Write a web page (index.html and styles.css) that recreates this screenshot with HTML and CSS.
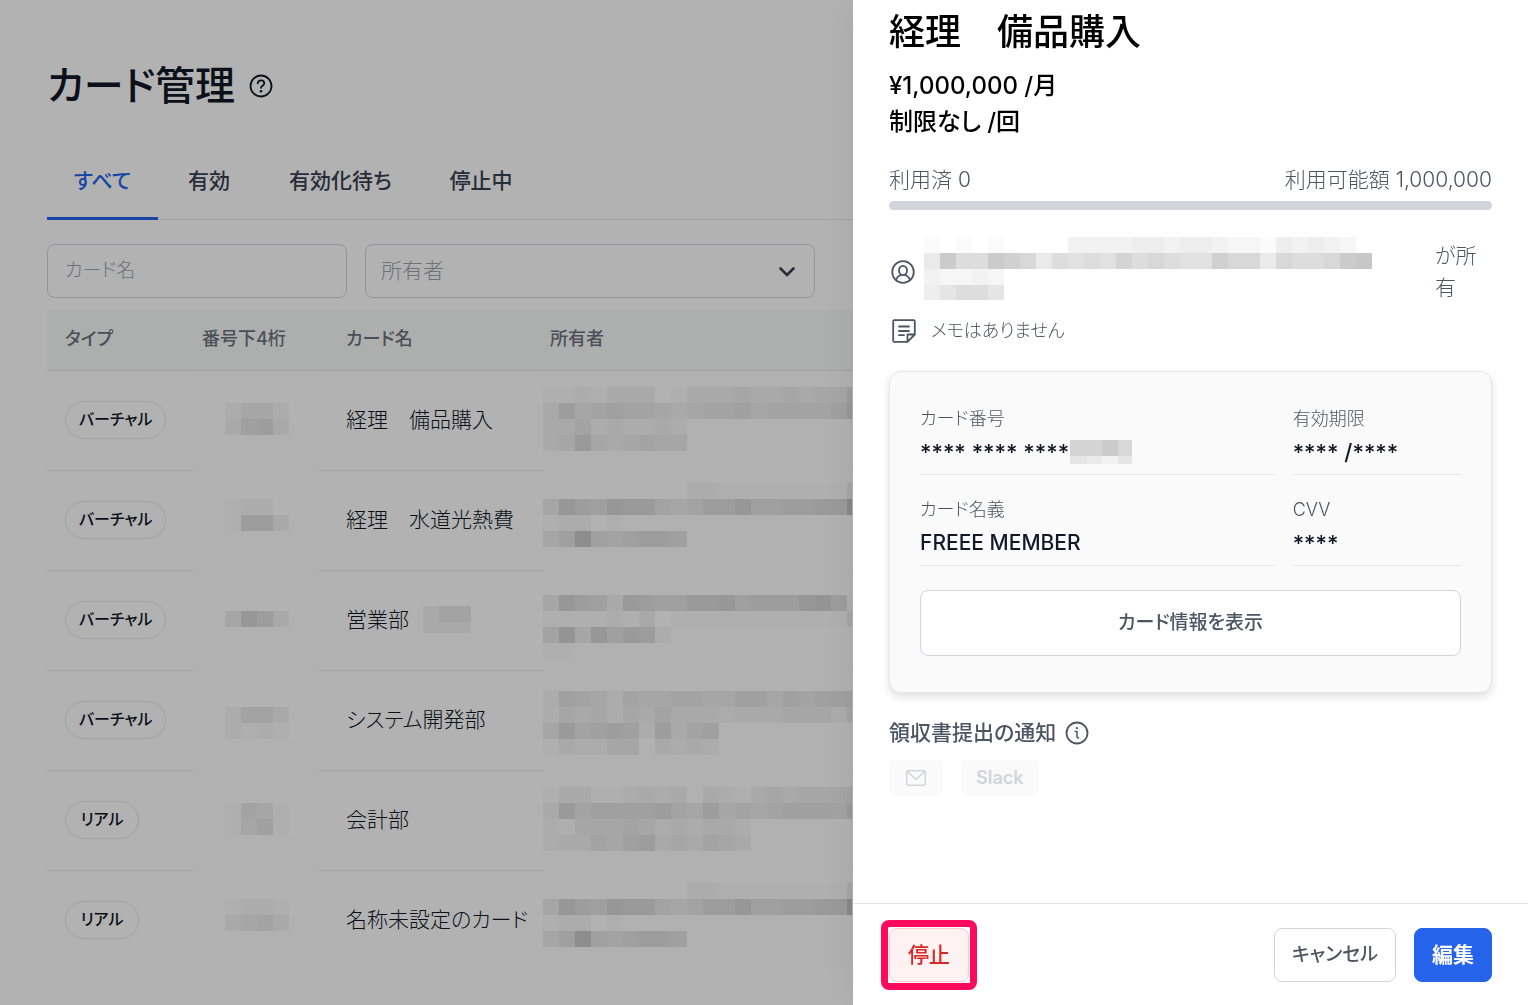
FILE: index.html
```html
<!DOCTYPE html>
<html lang="ja">
<head>
<meta charset="utf-8">
<meta name="viewport" content="width=device-width, initial-scale=1">
<title>カード管理</title>
<link rel="stylesheet" href="styles.css">
</head>
<body>
<main class="page">
  <header class="page-head">
    <h1 class="page-title">カード管理</h1>
    <svg class="icon" viewBox="0 0 24 24" role="img" aria-label="ヘルプ"><circle cx="12" cy="12" r="10.5"/><path d="M8.7 9.4C8.9 7.4 10.2 6.4 12 6.4c1.900 0 3.300 1.100 3.300 2.900 0 2.600-3.300 2.300-3.300 4.500"/><circle class="dot" cx="12" cy="17.200" r="1.300"/></svg>
  </header>

  <nav class="tabs">
    <a class="tab tab-active" href="#all">すべて</a>
    <a class="tab" href="#active">有効</a>
    <a class="tab" href="#waiting">有効化待ち</a>
    <a class="tab" href="#stopped">停止中</a>
  </nav>

  <form class="filters">
    <input class="field field-name" type="text" placeholder="カード名" aria-label="カード名">
    <div class="select-wrap">
      <select class="field field-owner" aria-label="所有者"><option>所有者</option></select>
      <svg class="chevron" viewBox="0 0 16 10" aria-hidden="true"><path d="M1.500 1.500L8 8l6.500-6.500"/></svg>
    </div>
  </form>

  <table class="cards">
    <colgroup><col class="col-type"><col class="col-number"><col class="col-name"><col></colgroup>
    <thead>
      <tr><th>タイプ</th><th>番号下4桁</th><th>カード名</th><th>所有者</th></tr>
    </thead>
    <tbody>
      <tr>
        <td><span class="badge">バーチャル</span></td>
        <td><svg class="mask mask-number" data-top="16" data-rows="00000000 00244200 00367300"></svg></td>
        <td>経理　備品購入</td>
        <td><svg class="mask mask-owner" data-top="16" data-rows="11213330133343343447 37456554345564555569 335232232 348434544"></svg></td>
      </tr>
      <tr>
        <td><span class="badge">バーチャル</span></td>
        <td><svg class="mask mask-number" data-top="12" data-rows="00000000 00122000 00177300"></svg></td>
        <td>経理　水道光熱費</td>
        <td><svg class="mask mask-owner" data-top="12" data-rows="00000000022111111114 4976988545779667788e 12201 46c656776"></svg></td>
      </tr>
      <tr>
        <td><span class="badge">バーチャル</span></td>
        <td><svg class="mask mask-number" data-top="24" data-rows="00000000 00497300"></svg></td>
        <td><span class="name">営業部<svg class="mask-inline mask-name" data-top="0" data-rows="355 333"></svg></span></td>
        <td><svg class="mask mask-owner" data-top="24" data-rows="49763876688967779a71 11112130111111111114 5a496872 11"></svg></td>
      </tr>
      <tr>
        <td><span class="badge">バーチャル</span></td>
        <td><svg class="mask mask-number" data-top="20" data-rows="00000000 00255300 00212100"></svg></td>
        <td>システム開発部</td>
        <td><svg class="mask mask-owner" data-top="20" data-rows="26542544554466465666 24342435333233344425 48567627356 13224403232"></svg></td>
      </tr>
      <tr>
        <td><span class="badge">リアル</span></td>
        <td><svg class="mask mask-number" data-top="16" data-rows="00000000 00154100 00146100"></svg></td>
        <td>会計部</td>
        <td><svg class="mask mask-owner" data-top="16" data-rows="13311232303213434445 38566667547454566658 2144454232332 2335467343543"></svg></td>
      </tr>
      <tr>
        <td><span class="badge">リアル</span></td>
        <td><svg class="mask mask-number" data-top="12" data-rows="00000000 00122100 00345300"></svg></td>
        <td>名称未設定のカード</td>
        <td><svg class="mask mask-owner" data-top="12" data-rows="00000000022111111114 4976988545779667788e 12201 46c656776"></svg></td>
      </tr>
    </tbody>
  </table>
</main>

<div class="overlay"></div>

<aside class="drawer" role="dialog" aria-labelledby="drawer-title">
  <div class="drawer-body">
    <h2 class="drawer-title" id="drawer-title">経理　備品購入</h2>
    <p class="limit">¥1,000,000 /月</p>
    <p class="limit">制限なし /回</p>

    <div class="usage"><span>利用済 0</span><span>利用可能額 1,000,000</span></div>
    <div class="usage-bar"></div>

    <div class="owner">
      <svg class="icon" viewBox="0 0 24 24" aria-hidden="true"><circle cx="12" cy="12" r="10.800"/><ellipse cx="12" cy="10.500" rx="4" ry="4.700"/><path d="M5 19.800c1-2.800 2.900-4.200 4.900-4.800M19 19.800c-1-2.800-2.900-4.200-4.900-4.800"/></svg>
      <svg class="mask-inline mask-holder" data-top="0" data-rows="101010000333344344322143432 5c88cb958787a89877b9959889cd5 32232 46886"></svg>
      <span class="owner-suffix">が所有</span>
    </div>
    <div class="memo">
      <svg class="icon" viewBox="0 0 24 24" aria-hidden="true"><path d="M2.200 1.200h19.600q1 0 1 1v13.300l-7.300 7.300H2.200q-1 0-1-1V2.200q0-1 1-1zM22.800 15.500h-7.300v7.300"/><path d="M7 7.500h10M7 12h10M7 16.200h5"/></svg>
      <span class="memo-text">メモはありません</span>
    </div>

    <section class="card">
      <dl class="details">
        <div class="detail detail-wide"><dt>カード番号</dt><dd class="secret">**** **** ****<svg class="mask-inline mask-digits" data-top="0" data-rows="aac9 6536"></svg></dd></div>
        <div class="detail"><dt>有効期限</dt><dd class="secret">**** /****</dd></div>
        <div class="detail detail-wide"><dt>カード名義</dt><dd>FREEE MEMBER</dd></div>
        <div class="detail"><dt>CVV</dt><dd class="secret">****</dd></div>
      </dl>
      <button class="button button-reveal" type="button">カード情報を表示</button>
    </section>

    <h3 class="notice-title">領収書提出の通知
      <svg class="icon" viewBox="0 0 24 24" role="img" aria-label="情報"><circle cx="12" cy="12" r="10.500"/><path class="thin" d="M10.200 10.500H12v5.200q0 1.200 1.600 1.200"/><circle class="dot" cx="11.900" cy="7.200" r="1.100"/></svg>
    </h3>
    <div class="channels">
      <button class="channel" type="button" disabled aria-label="メール"><svg class="mail" viewBox="0 0 20 16" aria-hidden="true"><rect x="0.750" y="0.750" width="18.500" height="14.500" rx="1"/><path d="M1.200 1.200l8.800 8.300 8.800-8.300"/></svg></button>
      <button class="channel" type="button" disabled>Slack</button>
    </div>
  </div>

  <footer class="drawer-foot">
    <div class="highlight"><button class="button button-stop" type="button">停止</button></div>
    <div class="actions">
      <button class="button button-cancel" type="button">キャンセル</button>
      <button class="button button-primary" type="button">編集</button>
    </div>
  </footer>
</aside>
<script src="mosaic.js"></script>
</body>
</html>
```
FILE: styles.css
```css
* { box-sizing: border-box; }

body {
  margin: 0;
  background: #fff;
  color: #111827;
  font: 400 21px/32px Inter, "Noto Sans CJK JP", sans-serif;
  font-feature-settings: "palt";
}

h1, h2, h3, p, dl, dd { margin: 0; }
button, input, select { font: inherit; font-feature-settings: inherit; color: inherit; }
svg { display: block; }

.icon {
  flex: none;
  width: 24px;
  height: 24px;
  fill: none;
  stroke: currentColor;
  stroke-width: 1.8;
  stroke-linecap: round;
  stroke-linejoin: round;
}
.icon .dot { fill: currentColor; stroke: none; }
.icon .thin { stroke-width: 1.5; }

/* Card list */
.page { height: 100vh; padding: 52px 47px 0; overflow: hidden; }
.page-head { display: flex; align-items: center; gap: 14px; }
.page-title { font-size: 40px; line-height: 68px; font-weight: 500; }

.tabs { display: flex; margin-top: 24px; border-bottom: 1px solid #e5e7eb; }
.tab {
  min-width: 102px;
  margin-bottom: -1px;
  padding: 21px 29px 20px;
  border-bottom: 3px solid transparent;
  color: #374151;
  font-weight: 500;
  text-align: center;
  text-decoration: none;
}
.tab-active { min-width: 111px; padding-right: 24px; padding-left: 24px; border-color: #2563eb; color: #2563eb; }

.filters { display: flex; gap: 18px; margin-top: 24px; }
.field {
  width: 100%;
  height: 54px;
  padding: 0 17px 2px;
  border: 1px solid #d1d5db;
  border-radius: 8px;
  background: #fff;
  color: #9ca3af;
  font-weight: 300;
}
.field::placeholder { color: #9ca3af; opacity: 1; }
.field-name { width: 300px; font-size: 19px; }
.select-wrap { position: relative; width: 450px; }
.field-owner { padding: 0 15px; appearance: none; }
.chevron {
  position: absolute;
  top: 23px;
  right: 20px;
  width: 16px;
  height: 10px;
  fill: none;
  stroke: #374151;
  stroke-width: 2.6;
  stroke-linecap: round;
}

.cards { width: 100%; margin-top: 12px; border-collapse: separate; border-spacing: 0; table-layout: fixed; }
.col-type { width: 137px; }
.col-number { width: 144px; }
.col-name { width: 204px; }
.cards th, .cards td { position: relative; padding: 0 18px 2px; border-bottom: 1px solid #e5e7eb; text-align: left; white-space: nowrap; }
.cards th { height: 61px; background: #f8fbf9; color: #6b7280; font-size: 18px; line-height: 24px; font-weight: 500; }
.cards td { height: 100px; font-weight: 300; }
.cards tr:last-child td { border-bottom: 0; }
.name { display: flex; align-items: center; gap: 14px; }

.badge {
  display: inline-block;
  min-width: 74px;
  height: 38px;
  padding: 0 13px;
  border: 1px solid #e5e7eb;
  border-radius: 19px;
  font-size: 16px;
  line-height: 35px;
  font-weight: 500;
  text-align: center;
  vertical-align: middle;
}

/* Redacted areas */
.mask { position: absolute; top: 0; height: 100%; min-height: 101px; background: #fefefe; }
.mask-number { left: 9px; width: 126px; }
.mask-owner { left: 11px; width: 309px; }
.mask-inline { flex: none; }
.mask-name { width: 48px; height: 27px; }
.mask-holder { align-self: flex-start; width: 448px; height: 63px; }
.mask-digits { width: 62px; height: 24px; margin-left: 1px; }

.overlay { position: fixed; inset: 0; background: rgba(0, 0, 0, 0.3); }

/* Detail drawer */
.drawer {
  position: fixed;
  inset: 0 0 0 auto;
  display: flex;
  flex-direction: column;
  width: 675px;
  max-width: 100%;
  background: #fff;
  box-shadow: 0 0 36px rgba(0, 0, 0, 0.08);
  color: #4b5563;
}
.drawer-body { flex: 1; min-height: 0; padding: 7px 36px 0; overflow: hidden; }
.drawer-title { margin-bottom: 11px; color: #000; font-size: 36px; line-height: 50px; font-weight: 500; }
.limit { color: #000; font-size: 24px; line-height: 36px; font-weight: 500; }

.usage { display: flex; justify-content: space-between; margin-top: 24px; font-weight: 300; }
.usage-bar { height: 9px; margin-top: 5px; border-radius: 5px; background: #d1d5db; }

.owner { display: flex; align-items: center; gap: 9px; min-height: 70px; margin-top: 27px; padding-left: 2px; font-weight: 300; }
.owner-suffix { width: 57px; margin-left: auto; padding-right: 12px; line-break: anywhere; }
.memo { display: flex; align-items: center; gap: 15px; margin-top: 8px; padding-left: 3px; font-weight: 300; }
.memo-text { font-size: 18px; }

.card {
  margin-top: 24px;
  padding: 30px 30px 36px;
  border: 1px solid #e5e7eb;
  border-radius: 12px;
  background: #fafafa;
  box-shadow: 0 4px 8px rgba(0, 0, 0, 0.12);
}
.details { display: grid; grid-template-columns: repeat(3, 1fr); gap: 18px; }
.detail { padding-bottom: 6px; border-bottom: 1px solid #e5e7eb; }
.detail-wide { grid-column: span 2; }
.detail dt { padding-top: 3px; font-size: 18px; line-height: 27px; font-weight: 300; }
.detail dd { display: flex; align-items: center; height: 36px; padding-top: 4px; color: #111827; font-weight: 500; }
.detail .secret { font-size: 22px; }

.button {
  height: 54px;
  padding: 0 18px;
  border: 1px solid #d1d5db;
  border-radius: 8px;
  background: #fff;
  font-weight: 500;
}
.button-reveal { width: 100%; height: 66px; margin-top: 24px; font-size: 19px; }

.notice-title { display: flex; align-items: center; gap: 9px; margin-top: 24px; font-size: 21px; font-weight: 500; }
.channels { display: flex; gap: 18px; margin-top: 11px; }
.channel {
  display: flex;
  align-items: center;
  height: 36px;
  padding: 0 15px;
  border: 0;
  border-radius: 6px;
  background: #fafafa;
  color: #d1d5db;
  font-size: 18px;
  font-weight: 600;
}
.mail { width: 24px; height: 16px; fill: none; stroke: #d1d5db; stroke-width: 1.5; }

.drawer-foot {
  display: flex;
  justify-content: space-between;
  padding: 24px 36px 23px;
  border-top: 1px solid #e5e7eb;
}
.actions { display: flex; gap: 18px; }
.button-stop { border-color: #fecaca; background: #fef2f2; color: #dc2626; }
.button-cancel { padding: 0 17px; font-size: 19px; }
.button-primary { padding: 0 17px; border-color: #2563eb; background: #2563eb; color: #fff; font-weight: 700; }

.highlight { position: relative; }
.highlight::after {
  content: "";
  position: absolute;
  inset: -8px;
  border: 7px solid #ff0a5c;
  border-radius: 8px;
  pointer-events: none;
}
```
FILE: mosaic.js
```js
// Fills each redacted area with 16px blocks; a hex digit gives the darkness of a block.
const BLOCK = 16;
document.querySelectorAll('svg[data-rows]').forEach((svg) => {
  svg.setAttribute('aria-hidden', 'true');
  const top = Number(svg.dataset.top);
  svg.dataset.rows.split(' ').forEach((row, y) => {
    [...row].forEach((digit, x) => {
      const level = Math.round(255 - parseInt(digit, 16) * 4.3);
      const rect = document.createElementNS('http://www.w3.org/2000/svg', 'rect');
      rect.setAttribute('x', x * BLOCK);
      rect.setAttribute('y', top + y * BLOCK);
      rect.setAttribute('width', BLOCK);
      rect.setAttribute('height', BLOCK);
      rect.setAttribute('fill', `rgb(${level}, ${level}, ${level})`);
      svg.append(rect);
    });
  });
});
```
